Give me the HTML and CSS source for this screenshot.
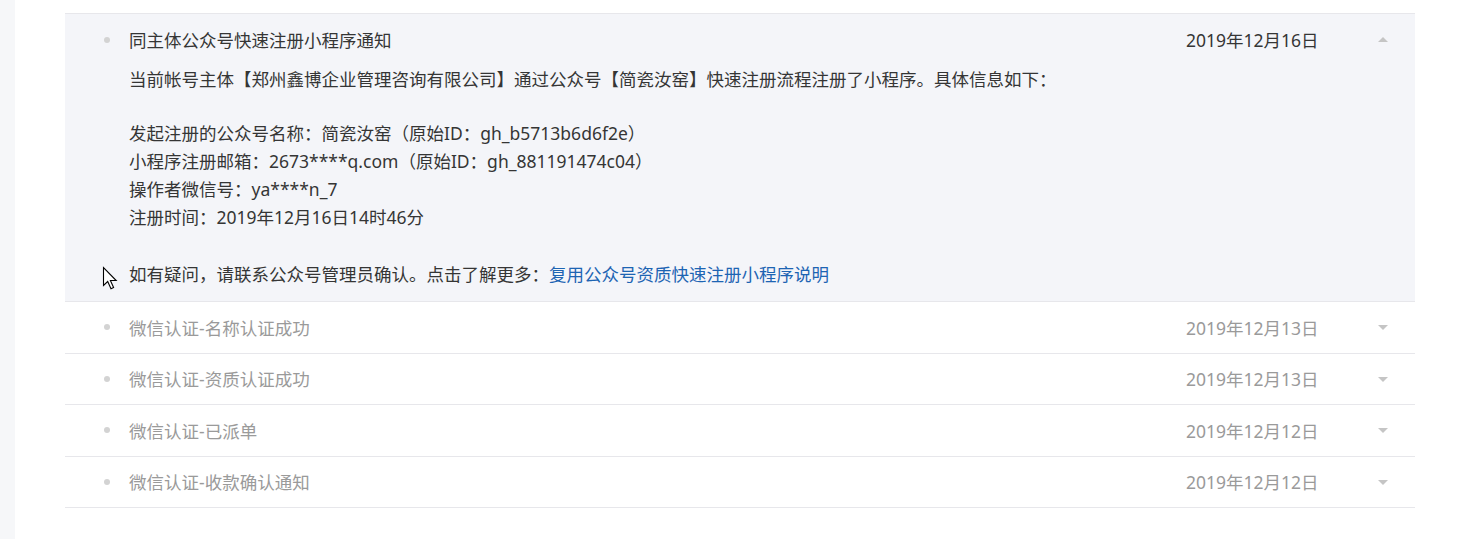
FILE: index.html
```html
<!DOCTYPE html>
<html lang="zh-CN">
<head>
<meta charset="utf-8">
<title>通知</title>
<link rel="stylesheet" href="styles.css">
</head>
<body>
<div class="page">
  <div class="side"></div>
  <div class="main">
    <ul class="list">
      <li class="item open">
        <div class="head">
          <span class="dot"></span>
          <span class="title">同主体公众号快速注册小程序通知</span>
          <span class="date">2019年12月16日</span>
          <span class="arrow up"></span>
        </div>
        <div class="body">
          <p class="p1">当前帐号主体【郑州鑫博企业管理咨询有限公司】通过公众号【简瓷汝窑】快速注册流程注册了小程序。具体信息如下：</p>
          <p class="p2">发起注册的公众号名称：简瓷汝窑（原始ID：gh_b5713b6d6f2e）<br>小程序注册邮箱：2673****q.com（原始ID：gh_881191474c04）<br>操作者微信号：ya****n_7<br>注册时间：2019年12月16日14时46分</p>
          <p class="p3">如有疑问，请联系公众号管理员确认。点击了解更多：<a class="link" href="#">复用公众号资质快速注册小程序说明</a></p>
        </div>
      </li>
      <li class="item">
        <div class="head">
          <span class="dot"></span>
          <span class="title">微信认证-名称认证成功</span>
          <span class="date">2019年12月13日</span>
          <span class="arrow down"></span>
        </div>
      </li>
      <li class="item">
        <div class="head">
          <span class="dot"></span>
          <span class="title">微信认证-资质认证成功</span>
          <span class="date">2019年12月13日</span>
          <span class="arrow down"></span>
        </div>
      </li>
      <li class="item">
        <div class="head">
          <span class="dot"></span>
          <span class="title">微信认证-已派单</span>
          <span class="date">2019年12月12日</span>
          <span class="arrow down"></span>
        </div>
      </li>
      <li class="item">
        <div class="head">
          <span class="dot"></span>
          <span class="title">微信认证-收款确认通知</span>
          <span class="date">2019年12月12日</span>
          <span class="arrow down"></span>
        </div>
      </li>
    </ul>
  </div>
</div>
<svg class="cursor" width="17" height="25" viewBox="0 0 17 25" xmlns="http://www.w3.org/2000/svg">
  <path d="M1.5 1.5 L1.5 19.5 L5.7 15.5 L9 22.8 L11.6 21.6 L8.4 14.5 L14.2 14.5 Z" fill="#fff" stroke="#000" stroke-width="1.1" stroke-linejoin="miter"/>
</svg>
</body>
</html>
```

FILE: styles.css
```css
html, body {
  margin: 0;
  padding: 0;
  background: #ffffff;
}
body {
  font-family: "Noto Sans", "Noto Sans CJK SC", sans-serif;
  font-size: 17.5px;
  color: #353535;
  width: 1465px;
  height: 539px;
  overflow: hidden;
  position: relative;
}
.page {
  display: flex;
  height: 539px;
}
.side {
  width: 15px;
  background: #f6f7f9;
  flex: none;
}
.main {
  flex: 1;
  background: #ffffff;
  padding: 13px 50px 0 50px;
}
.list {
  list-style: none;
  margin: 0;
  padding: 0;
  border-top: 1px solid #e7e7eb;
}
.item {
  border-bottom: 1px solid #e7e7eb;
}
.item.open {
  background: #f4f5f9;
}
.head {
  display: flex;
  align-items: center;
  height: 50.5px;
  padding: 0 27px 0 39px;
}
.item.open .head {
  height: 51px;
}
.dot {
  width: 6px;
  height: 6px;
  border-radius: 50%;
  background: #d3d3d3;
  margin-right: 19px;
  flex: none;
}
.title {
  flex: 1;
  color: #9a9a9a;
  white-space: nowrap;
}
.date {
  width: 192px;
  color: #9a9a9a;
  white-space: nowrap;
  flex: none;
}
.item.open .title,
.item.open .date {
  color: #353535;
}
.arrow {
  width: 0;
  height: 0;
  border-left: 5px solid transparent;
  border-right: 5px solid transparent;
  flex: none;
}
.arrow.up {
  border-bottom: 5px solid #c5c5c5;
  margin-top: -1px;
}
.arrow.down {
  border-top: 5px solid #c5c5c5;
  margin-top: 1px;
}
.body {
  padding: 0 27px 13px 64px;
}
.body p {
  margin: 0;
  line-height: 28px;
  white-space: nowrap;
}
.body .p2 {
  margin-top: 26px;
}
.body .p3 {
  margin-top: 29px;
}
.link {
  color: #1d64b3;
  text-decoration: none;
}
.cursor {
  position: absolute;
  left: 102px;
  top: 266px;
}
```
